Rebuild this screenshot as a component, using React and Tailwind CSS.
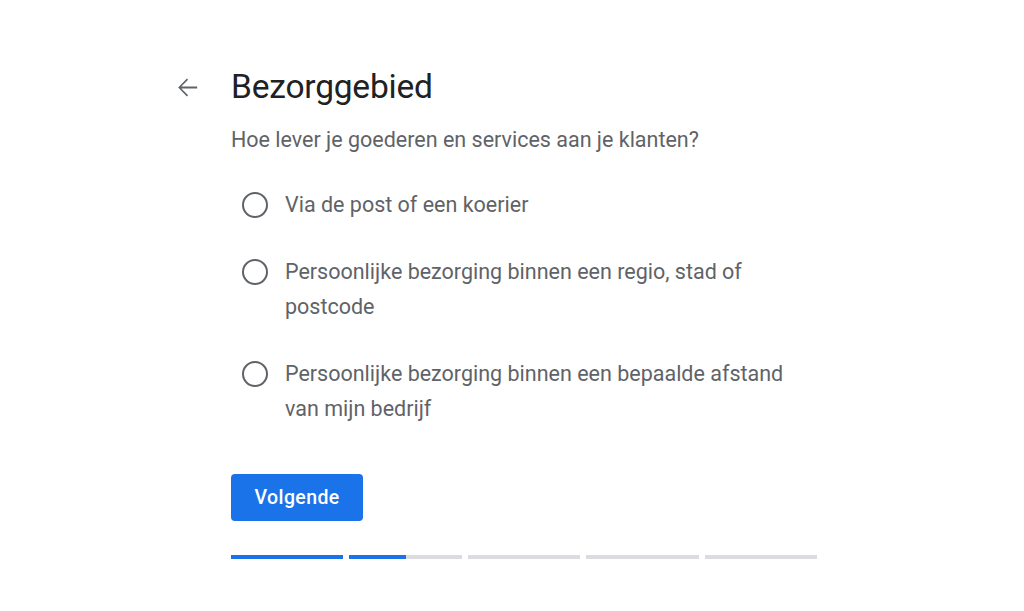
import React, { useState } from 'react';

const options = [
  'Via de post of een koerier',
  'Persoonlijke bezorging binnen een regio, stad of postcode',
  'Persoonlijke bezorging binnen een bepaalde afstand van mijn bedrijf',
];

const steps = [100, 50, 0, 0, 0];

export default function App() {
  const [selected, setSelected] = useState(null);

  return (
    <div className="min-h-screen bg-white font-['Roboto',sans-serif]">
      <div className="flex pt-[68px] pl-[171px]">
        {/* Back */}
        <button className="w-[32px] h-[38px] mr-[28px] flex items-center justify-center text-[#5f6368]">
          <svg width="29" height="29" viewBox="0 0 24 24" fill="currentColor">
            <path d="M20 11.2H6.9l5.6-5.6-1-1L4.3 12l7.2 7.4 1-1-5.6-5.6H20z" />
          </svg>
        </button>

        <div className="w-[586px]">
          <h1 className="text-[33.5px] leading-[38px] text-[#202124] font-normal tracking-[-0.2px]">Bezorggebied</h1>
          <p className="mt-[20px] text-[21.5px] leading-[28px] text-[#5f6368]">
            Hoe lever je goederen en services aan je klanten?
          </p>

          {/* Options */}
          <div className="mt-[33px] flex flex-col gap-[32px]">
            {options.map((label, i) => (
              <label key={i} className="flex items-start cursor-pointer" onClick={() => setSelected(i)}>
                <span className="w-[54px] h-[35px] flex items-center pl-[11px] shrink-0">
                  <span className={`w-[26px] h-[26px] rounded-full border-2 ${selected === i ? 'border-[#1a73e8]' : 'border-[#5f6368]'} flex items-center justify-center`}>
                    {selected === i && <span className="w-[12px] h-[12px] rounded-full bg-[#1a73e8]" />}
                  </span>
                </span>
                <span className="max-w-[515px] text-[21.5px] leading-[35px] text-[#5f6368]">{label}</span>
              </label>
            ))}
          </div>

          <button className="mt-[48px] h-[47px] px-[23.5px] rounded-[4px] bg-[#1a73e8] text-white text-[19.5px] font-medium tracking-[0.4px]">
            Volgende
          </button>

          {/* Progress */}
          <div className="mt-[34px] flex gap-[6px]">
            {steps.map((p, i) => (
              <div key={i} className="flex-1 h-[4px] bg-[#dadce0]">
                <div className="h-full bg-[#1a73e8]" style={{ width: `${p}%` }} />
              </div>
            ))}
          </div>
        </div>
      </div>
    </div>
  );
}
